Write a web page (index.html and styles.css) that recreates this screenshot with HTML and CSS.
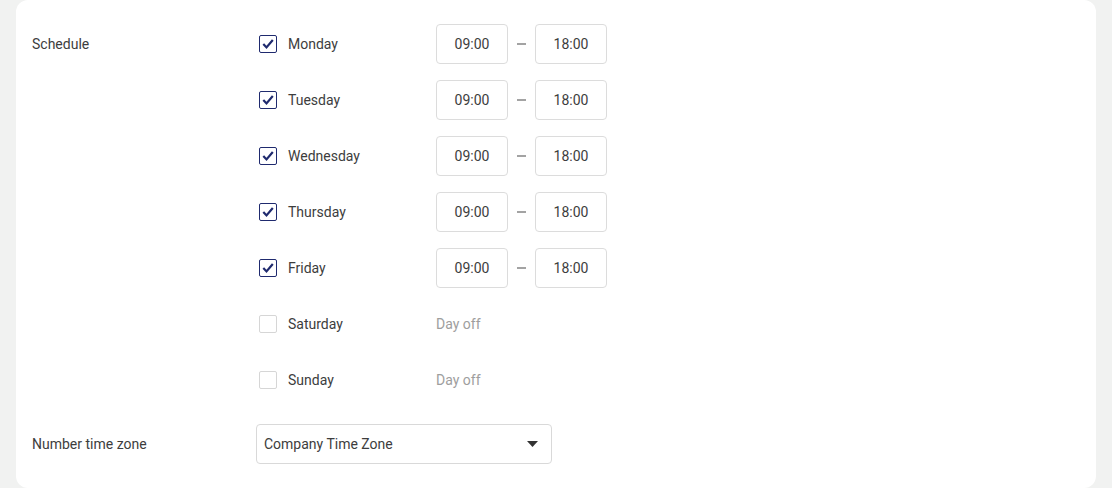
FILE: index.html
```html
<!DOCTYPE html>
<html>
<head>
<meta charset="utf-8">
<link rel="stylesheet" href="styles.css">
</head>
<body>
<div class="card">
  <div class="field">
    <div class="label">Schedule</div>
    <div class="days">
      <div class="day">
        <span class="cb on"><svg viewBox="0 0 18 18"><path d="M4.3 9 L7.5 12.4 L13.8 5"/></svg></span>
        <span class="name">Monday</span>
        <span class="time">09:00</span><span class="dash"></span><span class="time">18:00</span>
      </div>
      <div class="day">
        <span class="cb on"><svg viewBox="0 0 18 18"><path d="M4.3 9 L7.5 12.4 L13.8 5"/></svg></span>
        <span class="name">Tuesday</span>
        <span class="time">09:00</span><span class="dash"></span><span class="time">18:00</span>
      </div>
      <div class="day">
        <span class="cb on"><svg viewBox="0 0 18 18"><path d="M4.3 9 L7.5 12.4 L13.8 5"/></svg></span>
        <span class="name">Wednesday</span>
        <span class="time">09:00</span><span class="dash"></span><span class="time">18:00</span>
      </div>
      <div class="day">
        <span class="cb on"><svg viewBox="0 0 18 18"><path d="M4.3 9 L7.5 12.4 L13.8 5"/></svg></span>
        <span class="name">Thursday</span>
        <span class="time">09:00</span><span class="dash"></span><span class="time">18:00</span>
      </div>
      <div class="day">
        <span class="cb on"><svg viewBox="0 0 18 18"><path d="M4.3 9 L7.5 12.4 L13.8 5"/></svg></span>
        <span class="name">Friday</span>
        <span class="time">09:00</span><span class="dash"></span><span class="time">18:00</span>
      </div>
      <div class="day">
        <span class="cb"></span>
        <span class="name">Saturday</span>
        <span class="off">Day off</span>
      </div>
      <div class="day">
        <span class="cb"></span>
        <span class="name">Sunday</span>
        <span class="off">Day off</span>
      </div>
    </div>
  </div>
  <div class="field center">
    <div class="label">Number time zone</div>
    <div class="select">
      <span>Company Time Zone</span>
      <svg class="caret" viewBox="0 0 11 6"><path d="M0 0 H11 L5.5 6 Z"/></svg>
    </div>
  </div>
</div>
</body>
</html>
```

FILE: styles.css
```css
html, body {
  margin: 0;
  padding: 0;
}
body {
  background: #f1f2f1;
  font-family: Roboto, "Liberation Sans", sans-serif;
  font-size: 14px;
  color: #3d3d3d;
  height: 488px;
  overflow: hidden;
  padding: 0 16px;
}
.card {
  background: #fff;
  border-radius: 12px;
  padding: 24px 16px 24px 16px;
  display: flex;
  flex-direction: column;
  gap: 24px;
}
.field {
  display: flex;
  align-items: flex-start;
}
.field.center {
  align-items: center;
}
.label {
  width: 224px;
  line-height: 40px;
  height: 40px;
  flex: none;
}
.days {
  display: flex;
  flex-direction: column;
  gap: 16px;
}
.day {
  display: flex;
  align-items: center;
  height: 40px;
}
.cb {
  width: 18px;
  height: 18px;
  box-sizing: border-box;
  border: 1px solid #d6d6d6;
  border-radius: 2px;
  margin: 0 11px 0 3px;
  flex: none;
  display: flex;
}
.cb.on {
  border: 1.5px solid #1f2a6e;
}
.cb svg {
  fill: none;
  stroke: #1f2a6e;
  stroke-width: 2.2;
}
.cb.on svg {
  margin: -1.5px;
  width: 18px;
  height: 18px;
}
.name {
  width: 148px;
  flex: none;
}
.time {
  width: 72px;
  height: 40px;
  box-sizing: border-box;
  border: 1px solid #dcdcdc;
  border-radius: 4px;
  display: flex;
  align-items: center;
  justify-content: center;
}
.dash {
  width: 9px;
  height: 2px;
  background: #a3a3a3;
  margin: 0 9px;
}
.off {
  color: #9e9e9e;
}
.select {
  width: 296px;
  height: 40px;
  box-sizing: border-box;
  border: 1px solid #d9d9d9;
  border-radius: 4px;
  display: flex;
  align-items: center;
  justify-content: space-between;
  padding: 0 13px 0 7px;
}
.caret {
  width: 11px;
  height: 6px;
  fill: #333;
}
```
